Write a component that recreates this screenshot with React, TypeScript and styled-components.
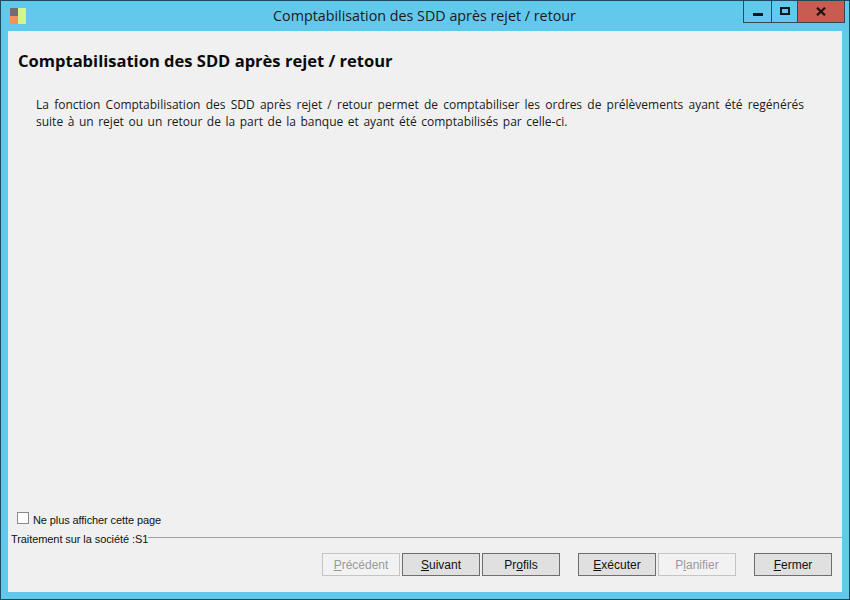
import React from "react";
import styled, { createGlobalStyle } from "styled-components";

const GlobalStyle = createGlobalStyle`
  html, body {
    margin: 0;
    padding: 0;
    background: #63c9ec;
  }
`;

const UI_FONT = `"Liberation Sans", "DejaVu Sans", sans-serif`;
const TEXT_FONT = `"Open Sans", "Noto Sans", sans-serif`;

const Window = styled.div`
  box-sizing: border-box;
  width: 850px;
  height: 600px;
  display: flex;
  flex-direction: column;
  background: #63c9ec;
  border: 1px solid #1d4a5c;
  padding: 0 7px 7px;
  font-family: ${UI_FONT};
  color: #111;
`;

const TitleBar = styled.div`
  height: 30px;
  display: flex;
  align-items: flex-start;
  position: relative;
  flex: none;
`;

const AppIcon = styled.svg`
  width: 16px;
  height: 16px;
  margin: 7px 0 0 2px;
  flex: none;
`;

const TitleText = styled.div`
  flex: 1;
  text-align: center;
  font-family: ${TEXT_FONT};
  font-size: 14.3px;
  line-height: 30px;
  color: #1a1a1a;
  padding-right: 19px;
`;

const WindowControls = styled.div`
  position: absolute;
  top: 0;
  right: -3px;
  display: flex;
  height: 21px;
  border: 1px solid #2e4a55;
  border-top: none;
`;

const ControlButton = styled.div<{ $w: number; $close?: boolean }>`
  width: ${props => props.$w}px;
  height: 21px;
  display: flex;
  align-items: center;
  justify-content: center;
  background: ${props => (props.$close ? "#c75c50" : "transparent")};
  & + & {
    border-left: 1px solid #2e4a55;
  }
`;

const MinGlyph = styled.div`
  width: 10px;
  height: 3px;
  margin-top: 5px;
  background: #0b1620;
`;

const MaxGlyph = styled.div`
  box-sizing: border-box;
  width: 10px;
  height: 8px;
  margin-top: -2px;
  border: 2px solid #0b1620;
`;

const CloseGlyph = styled.svg`
  width: 10px;
  height: 9px;
`;

const Client = styled.div`
  flex: 1;
  min-height: 0;
  display: flex;
  flex-direction: column;
  background: #f0f0f0;
`;

const Intro = styled.div`
  flex: 1;
  padding: 20px 38px 0 10px;
`;

const Heading = styled.h1`
  margin: 0 0 25px;
  font-family: ${TEXT_FONT};
  font-size: 16.55px;
  line-height: 20px;
  font-weight: 700;
  color: #0a0a0a;
`;

const Description = styled.div`
  margin: 0 0 0 18px;
  font-family: ${TEXT_FONT};
  font-size: 12px;
  line-height: 17px;
  color: #1a1a1a;
`;

const DescriptionLine = styled.div<{ $fill?: boolean }>`
  text-align-last: ${props => (props.$fill ? "justify" : "left")};
  word-spacing: ${props => (props.$fill ? "0" : "1.45px")};
`;

const SkipRow = styled.label`
  display: flex;
  align-items: center;
  gap: 4px;
  padding-left: 9px;
  height: 14px;
  font-size: 11px;
  letter-spacing: -0.1px;
  margin-bottom: 6px;
`;

const CheckBox = styled.span`
  box-sizing: border-box;
  width: 12px;
  height: 12px;
  background: #fff;
  border: 1px solid #8a8a8a;
  margin-top: -2px;
`;

const SkipLabel = styled.span`
  padding-top: 1px;
`;

const Separator = styled.div`
  display: flex;
  align-items: center;
  height: 13px;
  padding-left: 3px;
  font-size: 11px;
  letter-spacing: -0.08px;
  &::after {
    content: "";
    flex: 1;
    border-top: 1px solid #a0a0a0;
    margin-top: -2px;
  }
`;

const ButtonBar = styled.div`
  display: flex;
  justify-content: flex-end;
  gap: 2px;
  padding: 8px 10px 16px 0;
`;

const ActionButton = styled.button<{ $gap?: boolean }>`
  box-sizing: border-box;
  width: 78px;
  height: 23px;
  padding: 0;
  margin-left: ${props => (props.$gap ? "16px" : "0")};
  background: ${props => (props.disabled ? "#f2f2f2" : "#e0e0e0")};
  border: 1px solid ${props => (props.disabled ? "#c4c4c4" : "#6e6e6e")};
  color: ${props => (props.disabled ? "#9a9a9a" : "#111")};
  font-family: ${UI_FONT};
  font-size: 12px;
  u {
    text-underline-offset: 1px;
  }
`;

const App = () => {
  return (
    <Window>
      <GlobalStyle />
      <TitleBar>
        <AppIcon viewBox="0 0 16 16">
          <rect x="0" y="0" width="8" height="8" fill="#6f6f6f" />
          <rect x="0" y="8" width="8" height="8" fill="#f58f5d" />
          <rect x="8" y="0" width="8" height="16" fill="#d3f58a" />
        </AppIcon>
        <TitleText>Comptabilisation des SDD après rejet / retour</TitleText>
        <WindowControls>
          <ControlButton $w={27}>
            <MinGlyph />
          </ControlButton>
          <ControlButton $w={25}>
            <MaxGlyph />
          </ControlButton>
          <ControlButton $w={46} $close>
            <CloseGlyph viewBox="0 0 10 9">
              <path d="M1 0.8 L9 8.2 M9 0.8 L1 8.2" stroke="#1b1210" strokeWidth="2.2" />
            </CloseGlyph>
          </ControlButton>
        </WindowControls>
      </TitleBar>
      <Client>
        <Intro>
          <Heading>Comptabilisation des SDD après rejet / retour</Heading>
          <Description>
            <DescriptionLine $fill>
              La fonction Comptabilisation des SDD après rejet / retour permet de comptabiliser les ordres de
              prélèvements ayant été regénérés
            </DescriptionLine>
            <DescriptionLine>
              suite à un rejet ou un retour de la part de la banque et ayant été comptabilisés par celle-ci.
            </DescriptionLine>
          </Description>
        </Intro>
        <SkipRow>
          <CheckBox />
          <SkipLabel>Ne plus afficher cette page</SkipLabel>
        </SkipRow>
        <Separator>Traitement sur la société :S1</Separator>
        <ButtonBar>
          <ActionButton disabled><u>P</u>récédent</ActionButton>
          <ActionButton><u>S</u>uivant</ActionButton>
          <ActionButton>Pr<u>o</u>fils</ActionButton>
          <ActionButton $gap><u>E</u>xécuter</ActionButton>
          <ActionButton disabled>P<u>l</u>anifier</ActionButton>
          <ActionButton $gap><u>F</u>ermer</ActionButton>
        </ButtonBar>
      </Client>
    </Window>
  );
};

export default App;
